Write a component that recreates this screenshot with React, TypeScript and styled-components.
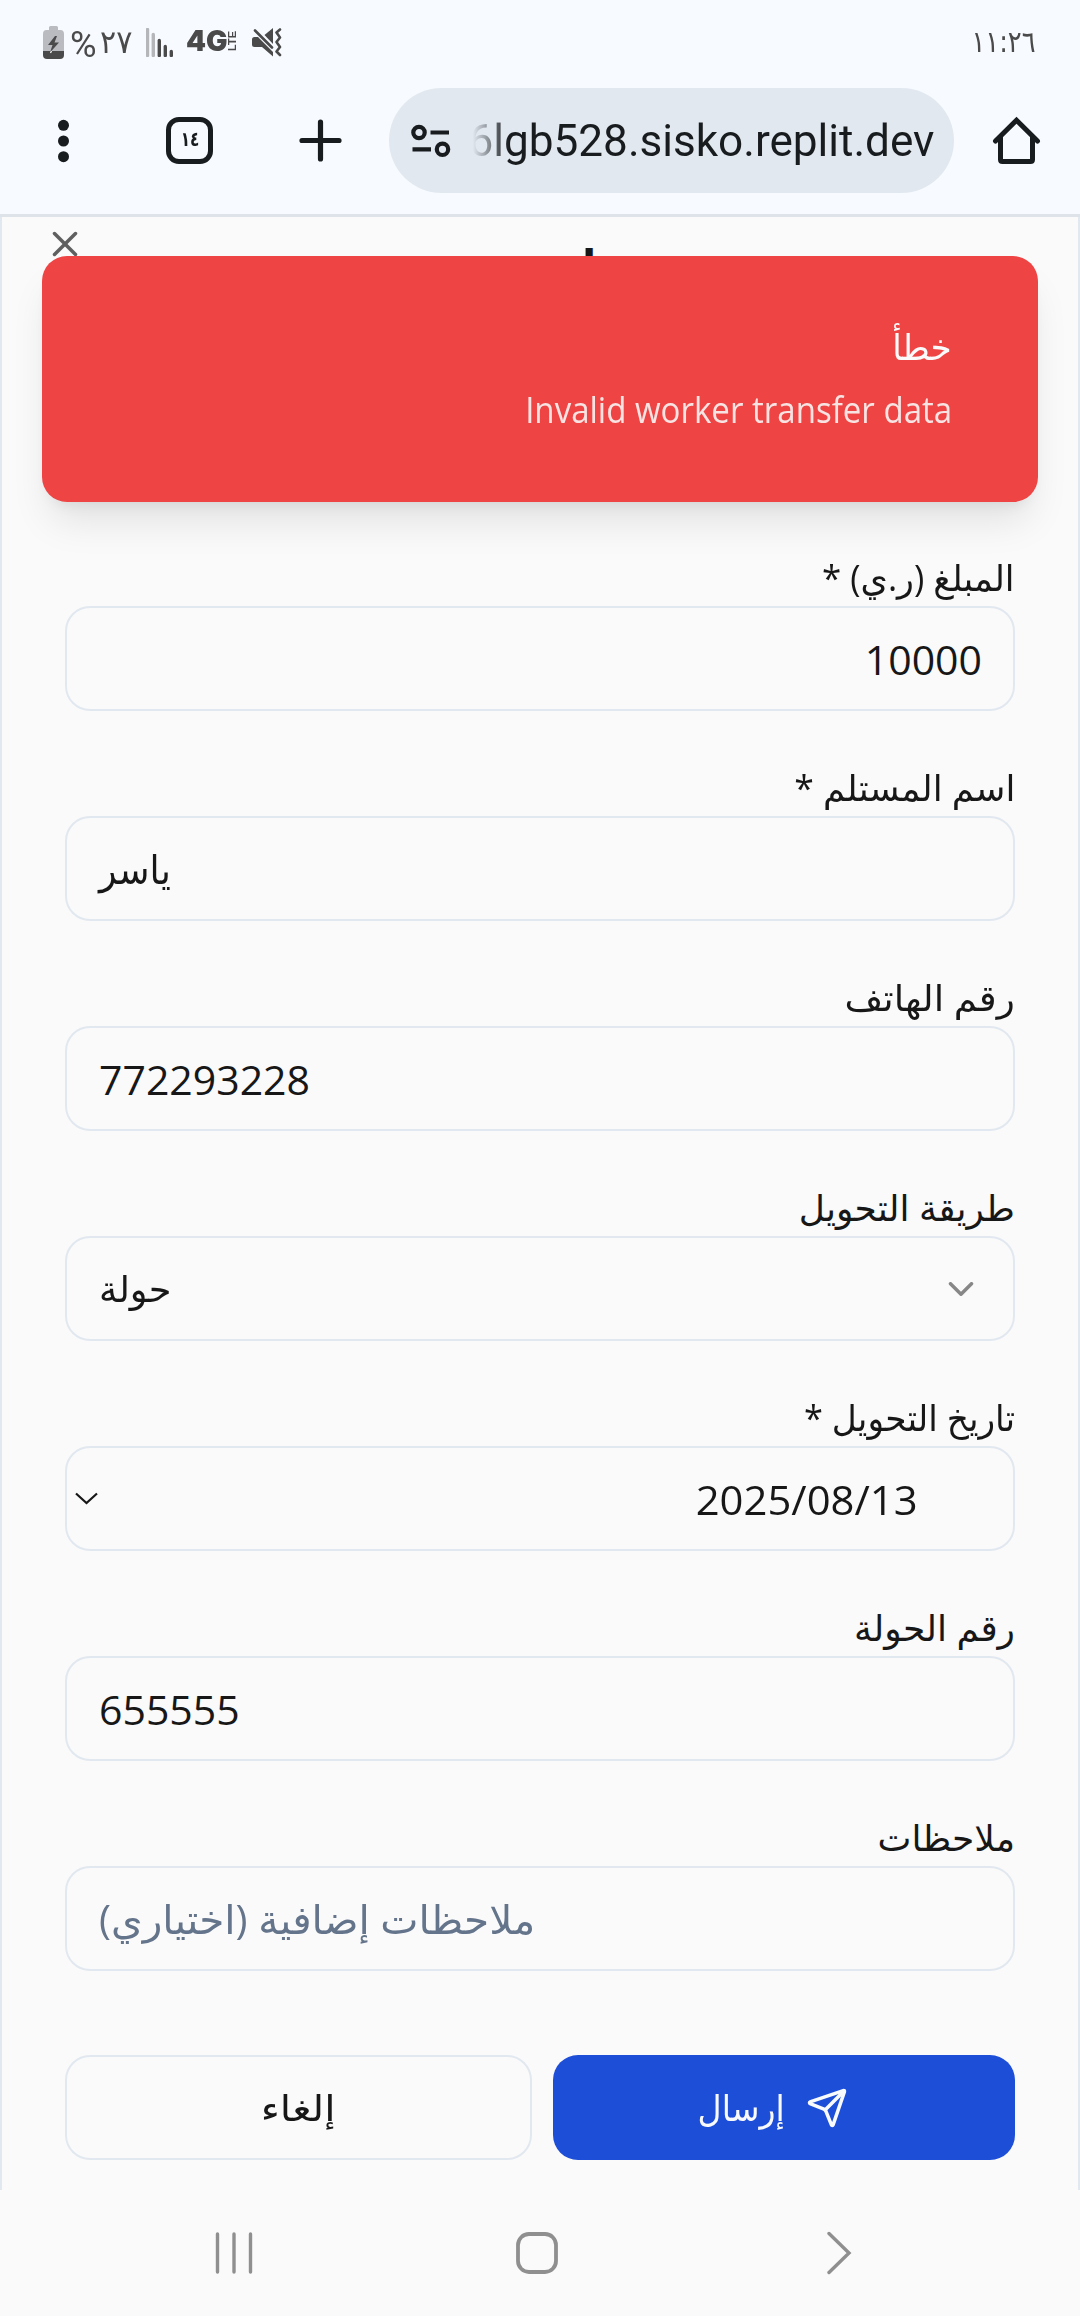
import React from "react";
import styled, { createGlobalStyle } from "styled-components";
import { ChevronDown, Send, X } from "lucide-react";

const GlobalStyle = createGlobalStyle`
  * { box-sizing: border-box; }
  body {
    margin: 0;
    background: #fafafa;
    font-family: "Open Sans", "DejaVu Sans", sans-serif;
    color: #171717;
  }
`;

const Screen = styled.div`
  display: flex;
  flex-direction: column;
  width: 1080px;
  height: 2316px;
  overflow: hidden;
  background: #fafafa;
`;

const Chrome = styled.header`
  flex: none;
  height: 217px;
  background: #f7faff;
  border-bottom: 3px solid #dee3e9;
`;

const StatusBar = styled.div`
  display: flex;
  align-items: center;
  justify-content: space-between;
  height: 84px;
  padding: 0 44px 0 43px;
  color: #4a4a4a;
`;

const StatusIcons = styled.div`
  display: flex;
  align-items: center;
`;

/* Text squeezed or stretched horizontally from one of its edges. */
const Fit = styled.span<{ $x?: number; $from?: string }>`
  display: inline-block;
  white-space: nowrap;
  transform: scaleX(${(p) => p.$x ?? 1});
  transform-origin: ${(p) => p.$from ?? "center"} center;
`;

const Percent = styled.span`
  width: 28px;
  margin-left: 6px;
  padding-top: 5px;
  font: 400 37px/40px Roboto, sans-serif;
`;

const BatteryLevel = styled.span`
  width: 33px;
  margin-left: 2px;
  font: 32px/40px "DejaVu Sans", sans-serif;
`;

const Network = styled.span`
  display: flex;
  align-items: center;
  width: 51px;
  height: 24px;
  margin: -2px 15px 0 12px;
`;

const Generation = styled.span`
  width: 41px;
  font: 900 28px/24px Inter, sans-serif;
`;

const Lte = styled.span`
  writing-mode: vertical-rl;
  transform: rotate(180deg);
  font: 700 11px/11px "Liberation Sans", sans-serif;
`;

const Clock = styled.span`
  font: 30px/40px "DejaVu Sans", sans-serif;
`;

const Toolbar = styled.div`
  display: flex;
  align-items: center;
  height: 113px;
  padding: 0 36px 0 57px;
`;

const TabCount = styled.div`
  display: flex;
  align-items: center;
  justify-content: center;
  width: 47px;
  height: 47px;
  margin: 0 86px 0 96px;
  border: 5px solid #191c1e;
  border-radius: 13px;
  color: #191c1e;
  font: bold 20px/24px "DejaVu Sans Condensed", "DejaVu Sans", sans-serif;
  padding-bottom: 3px;
`;

const AddressBar = styled.div`
  display: flex;
  align-items: center;
  width: 565px;
  height: 105px;
  margin: 0 38px 0 47px;
  padding: 0 20px 0 22px;
  border-radius: 53px;
  background: #e1e8f0;
`;

const Url = styled.div`
  display: flex;
  justify-content: flex-end;
  flex: 1;
  margin-left: 22px;
  padding-top: 1px;
  overflow: hidden;
  color: #191c1e;
  font: 45px/60px Roboto, sans-serif;
  mask-image: linear-gradient(to right, transparent, #000 36px);
`;

const Page = styled.main`
  position: relative;
  flex: none;
  display: flex;
  flex-direction: column;
  height: 1973px;
  border: solid #e2e8f0;
  border-width: 0 2px;
`;

const DialogHead = styled.div`
  display: grid;
  grid-template-columns: 42px 1fr 42px;
  align-items: start;
  height: 341px;
  padding: 6px 42px 0;
  color: #5f5f5f;
`;

const Title = styled.h2`
  margin: 18px 0 0;
  color: #171717;
  font-size: 41px;
  line-height: 44px;
  font-weight: 700;
  text-align: center;
`;

const Toast = styled.div`
  position: absolute;
  top: 39px;
  left: 40px;
  right: 40px;
  height: 246px;
  padding: 68px 86px 0 0;
  border-radius: 25px;
  background: #ef4444;
  color: #fafafa;
  text-align: right;
  font-size: 36px;
  box-shadow: 0 26px 39px -8px rgba(0, 0, 0, 0.1), 0 10px 16px -10px rgba(0, 0, 0, 0.1);
`;

const ToastTitle = styled.div`
  height: 52px;
  line-height: 46px;
`;

const ToastText = styled.div`
  margin-top: 8px;
  line-height: 52px;
  opacity: 0.88;
`;

const Form = styled.div`
  display: flex;
  flex-direction: column;
  gap: 57px;
  padding: 0 63px;
`;

const Field = styled.div`
  display: flex;
  flex-direction: column;
  gap: 12px;
`;

const Label = styled.label`
  height: 36px;
  font-size: 36px;
  line-height: 39px;
  text-align: right;
`;

const Box = styled.div<{ $end?: number; $muted?: boolean; $size?: number }>`
  display: flex;
  align-items: center;
  justify-content: ${(p) => (p.$end ? "flex-end" : "flex-start")};
  height: 105px;
  padding: 0 ${(p) => p.$end ?? 31}px 0 32px;
  border: 2px solid #e2e8f0;
  border-radius: 25px;
  font-size: ${(p) => p.$size ?? 41}px;
  line-height: 60px;
  color: ${(p) => (p.$muted ? "#64748b" : "#171717")};
`;

const SelectBox = styled(Box)`
  justify-content: space-between;
  svg { opacity: 0.5; }
`;

const DateBox = styled(Box)`
  justify-content: space-between;
  padding-left: 7px;
`;

const Actions = styled.div`
  display: grid;
  grid-template-columns: 467px 462px;
  justify-content: space-between;
  padding: 84px 63px 0;
`;

const Button = styled.button<{ $primary?: boolean }>`
  display: flex;
  align-items: center;
  justify-content: center;
  gap: 22px;
  height: 105px;
  padding: 0 ${(p) => (p.$primary ? "30px" : "0")} 0 0;
  border: ${(p) => (p.$primary ? "0" : "2px solid #e2e8f0")};
  border-radius: 25px;
  background: ${(p) => (p.$primary ? "#1d4ed8" : "#fafafa")};
  color: ${(p) => (p.$primary ? "#f8fafc" : "#171717")};
  font: 36px/50px "Open Sans", "DejaVu Sans", sans-serif;
`;

const NavBar = styled.nav`
  display: grid;
  grid-template-columns: 38px 42px 25px;
  column-gap: 263px;
  align-items: center;
  height: 126px;
  padding-left: 215px;
  svg:last-child { margin-left: 6px; }
`;

const BatteryIcon = () => (
  <svg width="21" height="33" viewBox="0 0 21 33">
    <path d="M6 1.5Q6 0 7.500 0h6Q15 0 15 1.500V4h2.500Q21 4 21 8v17H0V8Q0 4 3.500 4H6Z" fill="#b9bbc0" />
    <path d="M0 25h21v4q0 4-4 4H4q-4 0-4-4Z" fill="#4a4a4a" />
    <path d="M12 10 5 19h4.500L7 26.500 16 16.500h-4.500L14 10Z" fill="#4a4a4a" />
    <path d="m8.500 25-1 2" stroke="#fff" strokeWidth="1.200" />
  </svg>
);

const bars = [
  { x: 1.5, y: 0, c: "#b4b6ba" },
  { x: 7.3, y: 5, c: "#b4b6ba" },
  { x: 13.3, y: 11, c: "#4a4a4a" },
  { x: 19.3, y: 17, c: "#4a4a4a" },
  { x: 25.3, y: 22, c: "#4a4a4a" },
];

const SignalSvg = styled.svg`
  margin-left: 13px;
`;

const SignalIcon = () => (
  <SignalSvg width="28" height="29" viewBox="0 0 28 29">
    {bars.map((b) => (
      <line key={b.x} x1={b.x} x2={b.x} y1={b.y + 1.5} y2="27.500" stroke={b.c} strokeWidth="3.400" strokeLinecap="round" />
    ))}
  </SignalSvg>
);

const MuteIcon = () => (
  <svg width="30" height="29" viewBox="0 0 30 29" fill="none" stroke="#4a4a4a" strokeLinecap="round">
    <path d="M0 11.500Q0 9 2.500 9H6l15 15v4.500L10 19H2.500Q0 19 0 16.500Z" fill="#4a4a4a" stroke="none" />
    <path d="M21 0v16L12.500 7Z" fill="#4a4a4a" stroke="none" />
    <path d="m3 2.500 17 17" strokeWidth="2.600" />
    <path d="m28 1.500-3.500 3 3.500 5-3.500 4.500 3.500 5-3.500 4.500 3.500 3.500" strokeWidth="2.600" strokeLinejoin="round" />
  </svg>
);

const MenuIcon = () => (
  <svg width="13" height="44" viewBox="0 0 13 44" fill="#191c1e">
    <circle cx="6.500" cy="6.300" r="5.500" />
    <circle cx="6.500" cy="22" r="5.500" />
    <circle cx="6.500" cy="37.700" r="5.500" />
  </svg>
);

const PlusIcon = () => (
  <svg width="43" height="43" viewBox="0 0 43 43" stroke="#191c1e" strokeWidth="5.200" strokeLinecap="round">
    <path d="M21.500 3v37M3 21.500h37" />
  </svg>
);

const TuneIcon = () => (
  <svg width="40" height="34" viewBox="0 0 40 34" fill="none" stroke="#191c1e" strokeWidth="4.200">
    <circle cx="8" cy="8.500" r="5.700" />
    <path d="M19.500 8.500H38M1.500 25.300h18.500" />
    <circle cx="31.500" cy="25.300" r="5.700" />
  </svg>
);

const HomeIcon = () => (
  <svg width="49" height="49" viewBox="0 0 49 49" fill="none" stroke="#191c1e" strokeWidth="5" strokeLinecap="round" strokeLinejoin="round">
    <path d="M3.500 25 24.500 4.200 45.500 25" strokeLinejoin="miter" />
    <path d="M8.500 21v22.500q0 2 2 2h28q2 0 2-2V21" />
  </svg>
);

type TextField = { label: string; labelX: number };

const FieldLabel = ({ label, labelX }: TextField) => (
  <Label dir="rtl">
    <Fit $x={labelX} $from="right">{label}</Fit>
  </Label>
);

export default function App() {
  return (
    <Screen>
      <GlobalStyle />
      <Chrome>
        <StatusBar>
          <StatusIcons>
            <BatteryIcon />
            <Percent><Fit $x={0.98} $from="left">%</Fit></Percent>
            <BatteryLevel><Fit $x={0.94} $from="left">٢٧</Fit></BatteryLevel>
            <SignalIcon />
            <Network>
              <Generation><Fit $x={1.02} $from="left">4G</Fit></Generation>
              <Lte>LTE</Lte>
            </Network>
            <MuteIcon />
          </StatusIcons>
          <Clock dir="ltr"><Fit $x={0.86} $from="right">١١:٢٦</Fit></Clock>
        </StatusBar>
        <Toolbar>
          <MenuIcon />
          <TabCount><Fit $x={0.85}>١٤</Fit></TabCount>
          <PlusIcon />
          <AddressBar>
            <TuneIcon />
            <Url><Fit $x={0.98} $from="right">6lgb528.sisko.replit.dev</Fit></Url>
          </AddressBar>
          <HomeIcon />
        </Toolbar>
      </Chrome>

      <Page>
        <DialogHead>
          <X size={42} strokeWidth={2} />
          <Title dir="rtl">حولة جديدة</Title>
        </DialogHead>

        <Form>
          <Field>
            <FieldLabel label="المبلغ (ر.ي) *" labelX={0.97} />
            <Box $end={31}>10000</Box>
          </Field>
          <Field>
            <FieldLabel label="اسم المستلم *" labelX={0.99} />
            <Box $size={40}><Fit $x={0.91} $from="left">ياسر</Fit></Box>
          </Field>
          <Field>
            <FieldLabel label="رقم الهاتف" labelX={1.04} />
            <Box>772293228</Box>
          </Field>
          <Field>
            <FieldLabel label="طريقة التحويل" labelX={1} />
            <SelectBox $size={36}>
              <Fit $x={1.02} $from="left">حولة</Fit>
              <ChevronDown size={42} strokeWidth={2} />
            </SelectBox>
          </Field>
          <Field>
            <FieldLabel label="تاريخ التحويل *" labelX={0.955} />
            <DateBox $end={95}>
              <svg width="25" height="14" viewBox="0 0 25 14" fill="none" stroke="#171717" strokeWidth="2.200">
                <path d="m2 1.500 10.500 9.500L23 1.500" />
              </svg>
              <Fit $x={1.02} $from="right">2025/08/13</Fit>
            </DateBox>
          </Field>
          <Field>
            <FieldLabel label="رقم الحولة" labelX={1} />
            <Box>655555</Box>
          </Field>
          <Field>
            <FieldLabel label="ملاحظات" labelX={1} />
            <Box $muted $size={40} dir="ltr">
              <Fit $x={1.015} $from="left" dir="rtl">ملاحظات إضافية (اختياري)</Fit>
            </Box>
          </Field>
        </Form>

        <Actions>
          <Button><Fit $x={1.13}>إلغاء</Fit></Button>
          <Button $primary>
            <Fit $x={0.92} $from="right">إرسال</Fit>
            <Send size={42} strokeWidth={2} />
          </Button>
        </Actions>

        <Toast>
          <ToastTitle><Fit $x={0.95} $from="right">خطأ</Fit></ToastTitle>
          <ToastText><Fit $x={0.918} $from="right">Invalid worker transfer data</Fit></ToastText>
        </Toast>
      </Page>

      <NavBar>
        <svg width="38" height="42" viewBox="0 0 38 42" stroke="#8f8f8f" strokeWidth="3.400" strokeLinecap="round">
          <path d="M2.500 2v38M19 2v38M35.500 2v38" />
        </svg>
        <svg width="42" height="42" viewBox="0 0 42 42" fill="none" stroke="#8f8f8f" strokeWidth="3.800">
          <rect x="2" y="2" width="38" height="38" rx="11" />
        </svg>
        <svg width="25" height="44" viewBox="0 0 25 44" fill="none" stroke="#8f8f8f" strokeWidth="3.400" strokeLinecap="round">
          <path d="M2 2.500 22 22 2 41.500" />
        </svg>
      </NavBar>
    </Screen>
  );
}
